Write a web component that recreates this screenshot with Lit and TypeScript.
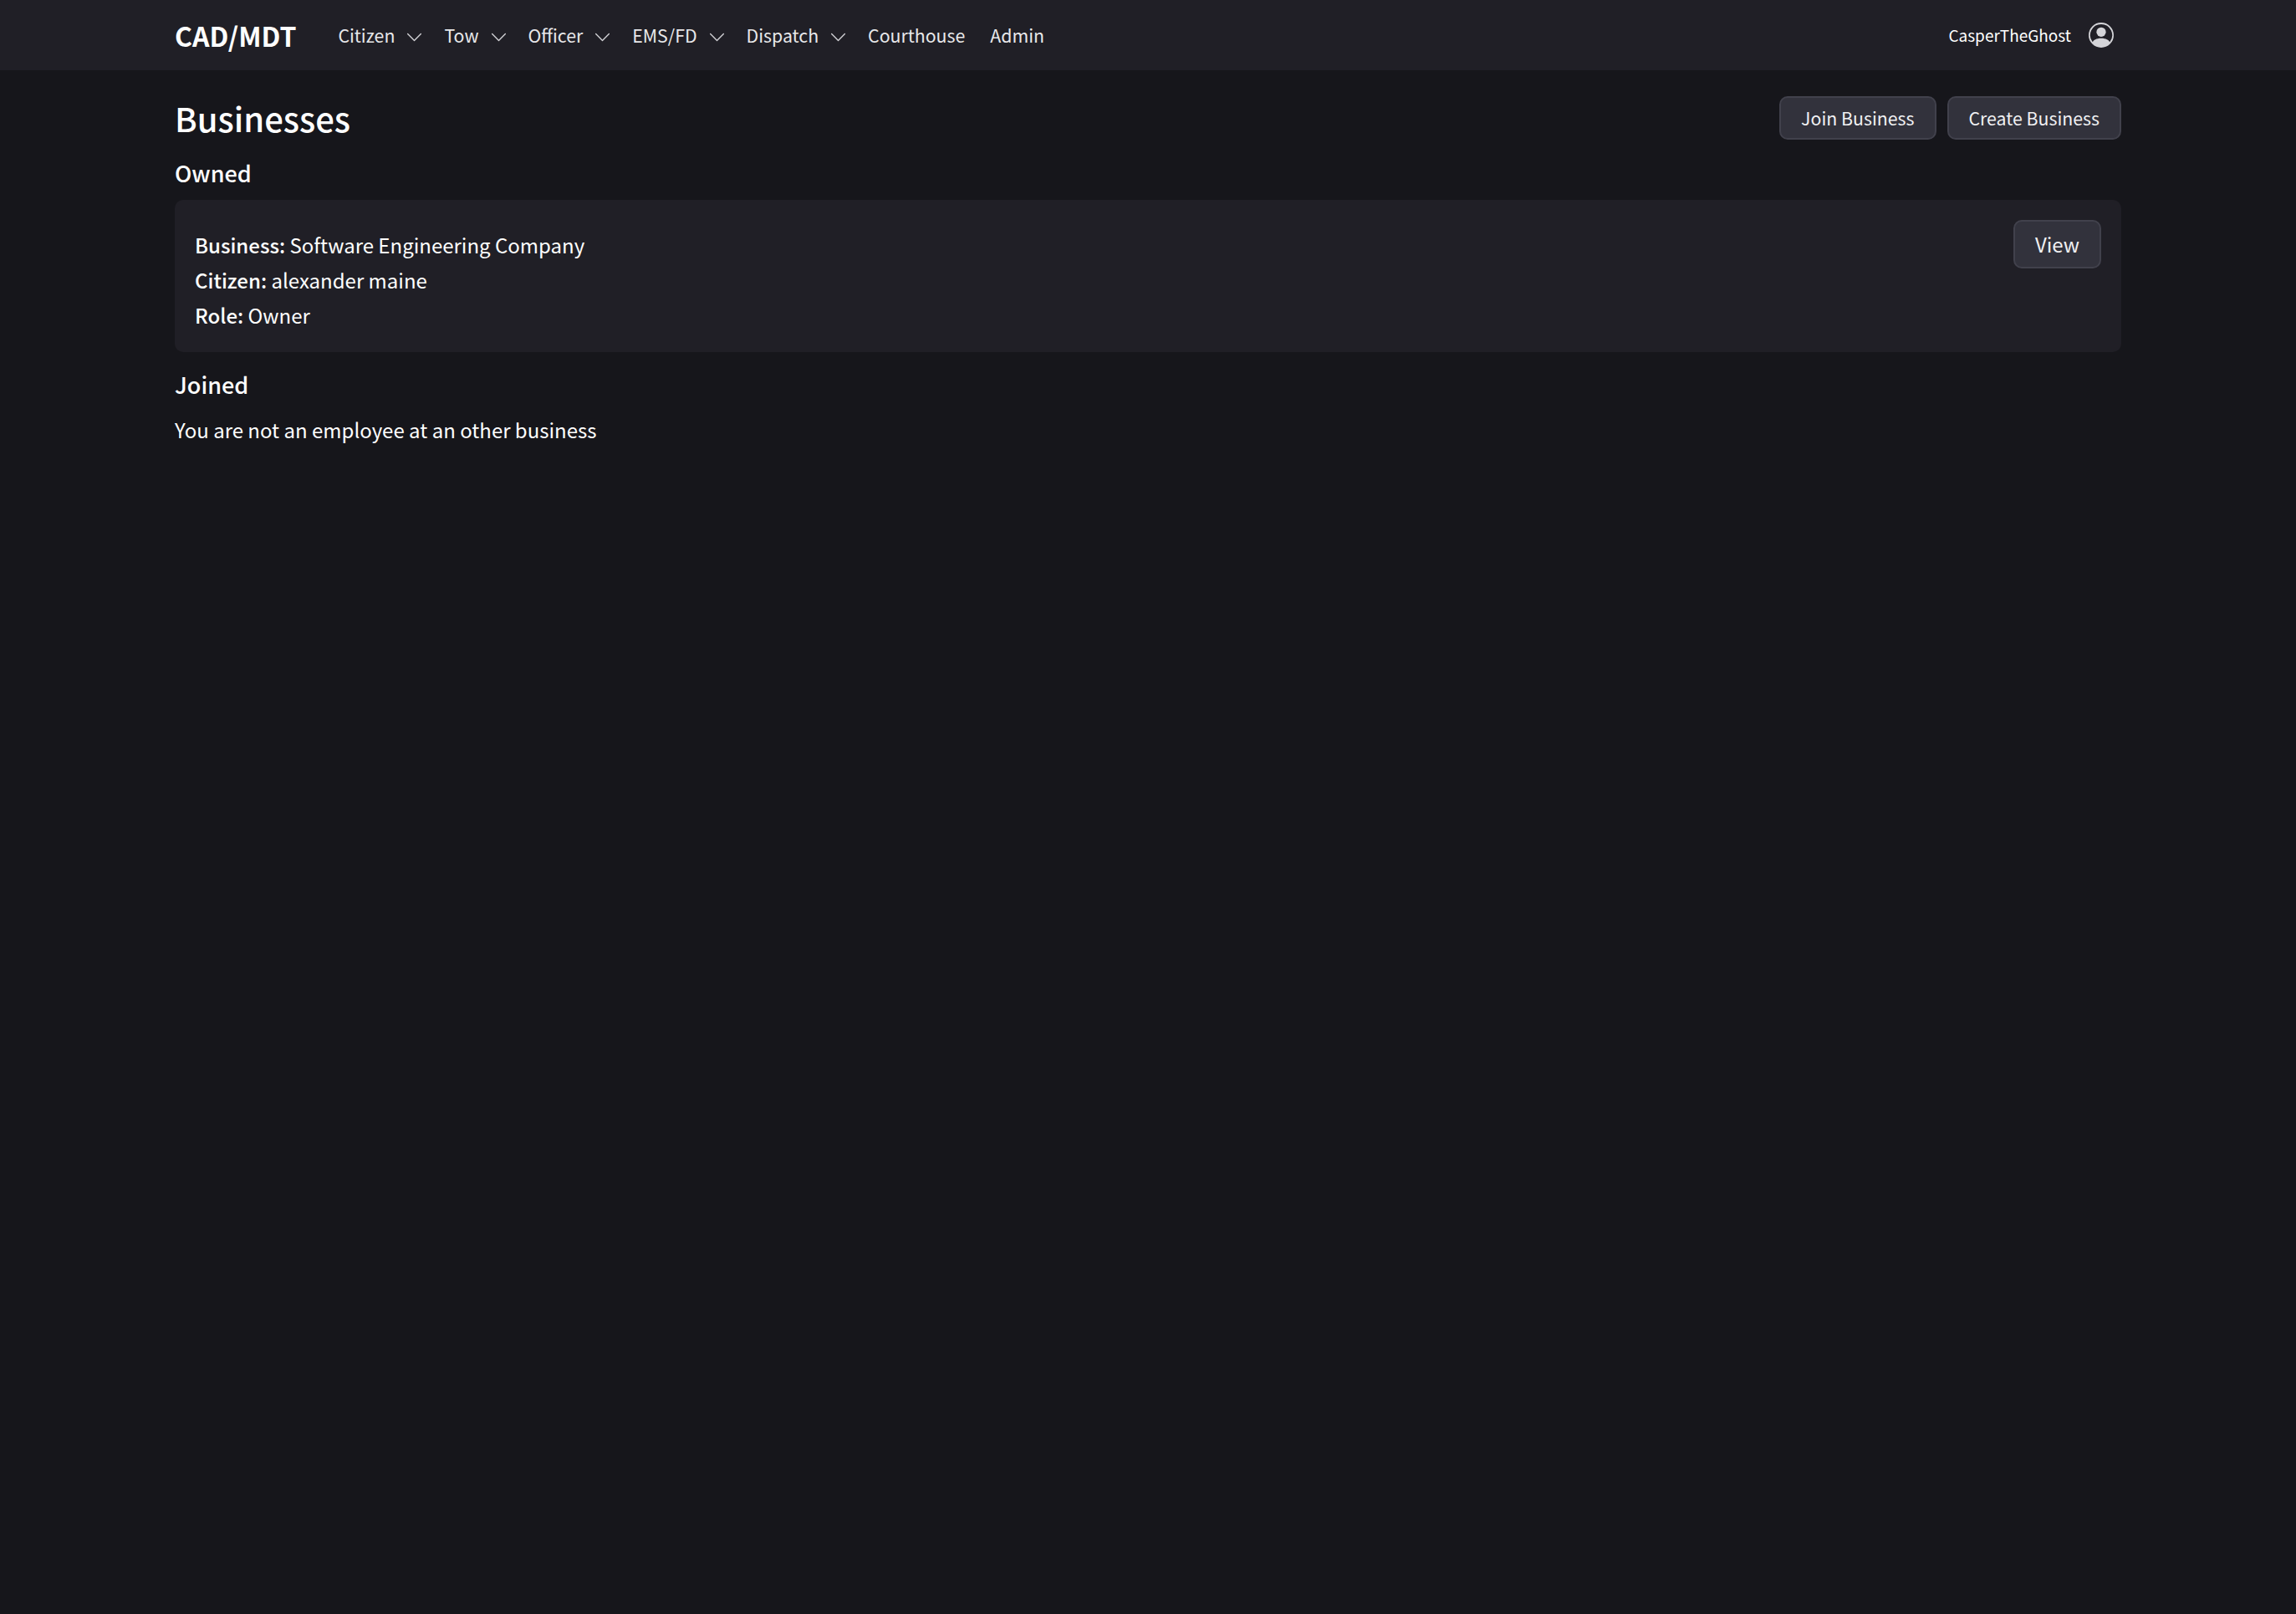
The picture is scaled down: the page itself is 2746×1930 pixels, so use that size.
import { LitElement, html, css, svg } from "lit";
import { customElement } from "lit/decorators.js";

const chevron = html`<svg class="chevron" viewBox="0 0 16 16" fill="currentColor">
  ${svg`<path fill-rule="evenodd" d="M1.646 4.646a.5.5 0 0 1 .708 0L8 10.293l5.646-5.647a.5.5 0 0 1 .708.708l-6 6a.5.5 0 0 1-.708 0l-6-6a.5.5 0 0 1 0-.708z"/>`}
</svg>`;

const menus = ["Citizen", "Tow", "Officer", "EMS/FD", "Dispatch"];
const links = ["Courthouse", "Admin"];

@customElement("app-root")
export class AppRoot extends LitElement {
  static styles = css`
    :host {
      display: block;
      min-height: 1930px;
      background: #16161b;
      color: #fff;
      font-family: "Noto Sans CJK SC", "Noto Sans", sans-serif;
      font-size: 24px;
      line-height: 42px;
    }
    .nav {
      height: 84px;
      background: #201f26;
      padding: 0 209px;
      display: flex;
      align-items: center;
      justify-content: space-between;
    }
    .left {
      display: flex;
      align-items: center;
    }
    .brand {
      font-size: 32px;
      font-weight: 700;
      margin-right: 50px;
    }
    .menu {
      display: flex;
      align-items: center;
      gap: 30px;
      font-size: 21.3px;
      color: #e8e8ea;
    }
    .item {
      display: flex;
      align-items: center;
      gap: 13px;
    }
    .chevron {
      width: 21px;
      height: 21px;
      margin: 4px -5px 0 0;
      color: #d4d4d8;
    }
    .user {
      display: flex;
      align-items: center;
      gap: 21px;
      font-size: 19px;
      padding-right: 9px;
    }
    .avatar {
      width: 30px;
      height: 30px;
      color: #d4d4d8;
    }
    main {
      padding: 31px 209px 0;
    }
    .head {
      display: flex;
      justify-content: space-between;
      align-items: flex-start;
    }
    h1 {
      margin: 0;
      font-size: 40px;
      font-weight: 500;
      line-height: 52px;
    }
    .actions {
      display: flex;
      gap: 13px;
    }
    button {
      font: inherit;
      color: #f0f0f2;
      background: #32323c;
      border: 2px solid #41414c;
      border-radius: 10px;
      cursor: pointer;
    }
    .actions button {
      font-size: 21.3px;
      height: 52px;
      line-height: 44px;
      padding: 0 24px;
    }
    h2 {
      margin: 0;
      font-size: 27px;
      font-weight: 500;
      line-height: 42px;
    }
    .owned {
      margin-top: 19px;
    }
    .joined {
      margin-top: 18px;
    }
    .card {
      margin-top: 11px;
      background: #201f26;
      border-radius: 10px;
      padding: 24px 24px 23px;
      display: flex;
      justify-content: space-between;
      align-items: flex-start;
    }
    .card b {
      font-weight: 500;
    }
    .rows {
      padding-top: 9px;
    }
    .card button {
      height: 58px;
      line-height: 50px;
      padding: 0 24px;
    }
    .empty {
      margin: 12px 0 0;
    }
  `;

  render() {
    return html`
      <header class="nav">
        <div class="left">
          <div class="brand">CAD/MDT</div>
          <nav class="menu">
            ${menus.map((m) => html`<div class="item">${m} ${chevron}</div>`)}
            ${links.map((l) => html`<div class="item">${l}</div>`)}
          </nav>
        </div>
        <div class="user">
          <span>CasperTheGhost</span>
          <svg class="avatar" viewBox="0 0 16 16" fill="currentColor">
            <path d="M11 6a3 3 0 1 1-6 0 3 3 0 0 1 6 0z" />
            <path
              fill-rule="evenodd"
              d="M0 8a8 8 0 1 1 16 0A8 8 0 0 1 0 8zm8-7a7 7 0 0 0-5.468 11.37C3.242 11.226 4.805 10 8 10s4.757 1.225 5.468 2.37A7 7 0 0 0 8 1z"
            />
          </svg>
        </div>
      </header>
      <main>
        <div class="head">
          <h1>Businesses</h1>
          <div class="actions">
            <button>Join Business</button>
            <button>Create Business</button>
          </div>
        </div>
        <h2 class="owned">Owned</h2>
        <section class="card">
          <div class="rows">
            <div><b>Business:</b> Software Engineering Company</div>
            <div><b>Citizen:</b> alexander maine</div>
            <div><b>Role:</b> Owner</div>
          </div>
          <button>View</button>
        </section>
        <h2 class="joined">Joined</h2>
        <p class="empty">You are not an employee at an other business</p>
      </main>
    `;
  }
}
